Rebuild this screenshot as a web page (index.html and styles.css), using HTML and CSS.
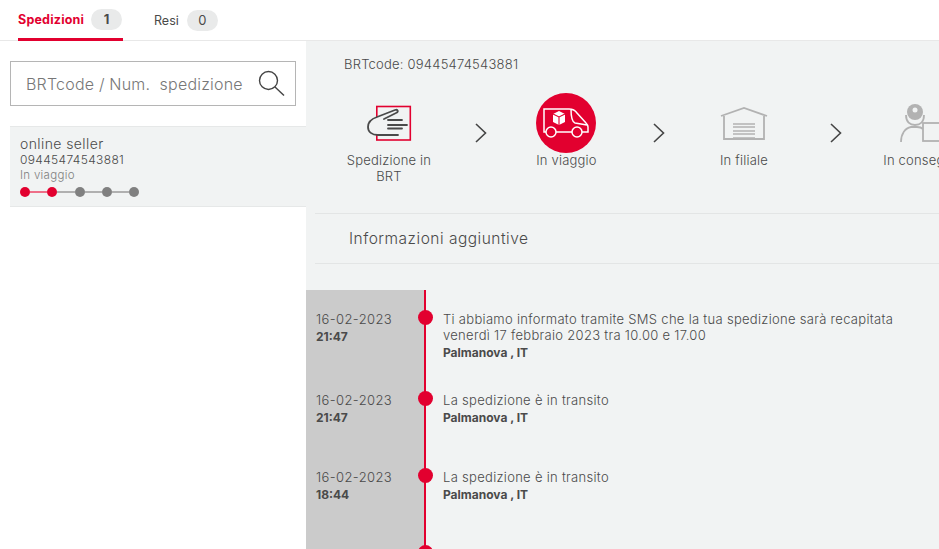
FILE: index.html
```html
<!DOCTYPE html>
<html lang="it">
<head>
    <meta charset="UTF-8">
    <meta name="viewport" content="width=device-width, initial-scale=1.0">
    <title>Spedizioni</title>
    <link rel="stylesheet" href="styles.css">
</head>
<body>
    <nav class="tabs">
        <a class="tab tab-active">Spedizioni <span class="tab-count">1</span></a>
        <a class="tab">Resi <span class="tab-count">0</span></a>
    </nav>

    <div class="main">
        <aside class="sidebar">
            <div class="search">
                <span class="search-text">BRTcode / Num. &nbsp;spedizione</span>
                <svg class="search-icon" width="27" height="27" viewBox="0 0 27 27" fill="none" stroke="#444" stroke-width="1.4">
                    <circle cx="10.5" cy="10.5" r="9"/>
                    <path d="M17 17l9 8.5"/>
                </svg>
            </div>
            <div class="parcel">
                <div class="parcel-name">online seller</div>
                <div class="parcel-code">09445474543881</div>
                <div class="parcel-status">In viaggio</div>
                <div class="dots">
                    <i class="dot dot-on"></i><i class="link link-on"></i>
                    <i class="dot dot-on"></i><i class="link"></i>
                    <i class="dot"></i><i class="link"></i>
                    <i class="dot"></i><i class="link"></i>
                    <i class="dot"></i>
                </div>
            </div>
        </aside>

        <section class="detail">
            <div class="code">BRTcode: 09445474543881</div>

            <div class="steps">
                <div class="step">
                    <div class="step-icon">
                        <svg width="46" height="36" viewBox="0 0 46 36" fill="none" stroke-linecap="round">
                            <rect x="10.800" y="1.500" width="33.500" height="33.500" stroke="#e2002f" stroke-width="1.600"/>
                            <path d="M29 5L11 12C5 14 2 17 2 22C2 27 6 30 12 30H32L36 14L30 8C33 7 32 4 29 5Z" fill="#f1f3f3"/>
                            <path d="M18 14L30 8C33 7 32 4 29 5L11 12C5 14 2 17 2 22C2 27 6 30 12 30H32M22 15H36M22 20H41M22 23.500H36" stroke="#4a4a4a" stroke-width="1.800"/>
                        </svg>
                    </div>
                    <div class="step-label">Spedizione in BRT</div>
                </div>
                <svg class="arrow" width="12" height="20" viewBox="0 0 12 20" fill="none" stroke="#444" stroke-width="1.600"><path d="M1 1l9.500 9L1 19"/></svg>

                <div class="step">
                    <div class="step-circle">
                        <svg width="46" height="30" viewBox="0 0 46 30" fill="none" stroke="#fff" stroke-width="1.500">
                            <path d="M3 24H1V1h25c4 0 6 1 8 4l9 10c1 1 2 2 2 4v5h-6M13 24h16M28 1c0 8 1 13 4 14l12 2"/>
                            <circle cx="8" cy="24" r="5"/>
                            <circle cx="34" cy="24" r="5"/>
                            <path d="M10 6l6-3 6 3v8l-6 3-6-3z" fill="#fff" stroke="none"/>
                            <path d="M10 6l6 3 6-3M16 9v8" stroke="#e2002f" stroke-width="1.100"/>
                        </svg>
                    </div>
                    <div class="step-label">In viaggio</div>
                </div>
                <svg class="arrow" width="12" height="20" viewBox="0 0 12 20" fill="none" stroke="#444" stroke-width="1.600"><path d="M1 1l9.500 9L1 19"/></svg>

                <div class="step">
                    <div class="step-icon">
                        <svg width="48" height="33" viewBox="0 0 48 33" fill="none" stroke="#b2b2b2" stroke-width="1.800">
                            <path d="M1 9L24 1l23 8M4 9v23h40V9"/>
                            <path d="M13 17h22M13 20h22M13 24h22M13 27h22M13 31h22" stroke-width="1.400"/>
                        </svg>
                    </div>
                    <div class="step-label">In filiale</div>
                </div>
                <svg class="arrow" width="12" height="20" viewBox="0 0 12 20" fill="none" stroke="#444" stroke-width="1.600"><path d="M1 1l9.500 9L1 19"/></svg>

                <div class="step">
                    <div class="step-icon step-icon-person">
                        <svg width="60" height="38" viewBox="0 0 60 38" fill="none" stroke="#b2b2b2" stroke-width="1.800">
                            <circle cx="15" cy="8" r="8" fill="#b2b2b2" stroke="none"/>
                            <circle cx="15" cy="6" r="2.500" fill="#f1f3f3" stroke="none"/>
                            <path d="M6 11c0 7 4 10 9 10s9-3 9-10"/>
                            <path d="M1 38c0-8 4-14 10-15h6c3 0 5 1 6 2"/>
                            <rect x="23" y="19" width="36" height="18" fill="#f1f3f3"/>
                        </svg>
                    </div>
                    <div class="step-label">In consegna</div>
                </div>
            </div>

            <div class="extra">Informazioni aggiuntive</div>

            <div class="timeline">
                <div class="event">
                    <div class="event-date">16-02-2023<b>21:47</b></div>
                    <div class="event-text">
                        Ti abbiamo informato tramite SMS che la tua spedizione sarà recapitata<br>
                        venerdì 17 febbraio 2023 tra 10.00 e 17.00
                        <b>Palmanova , IT</b>
                    </div>
                </div>
                <div class="event">
                    <div class="event-date">16-02-2023<b>21:47</b></div>
                    <div class="event-text">La spedizione è in transito<b>Palmanova , IT</b></div>
                </div>
                <div class="event">
                    <div class="event-date">16-02-2023<b>18:44</b></div>
                    <div class="event-text">La spedizione è in transito<b>Palmanova , IT</b></div>
                </div>
                <div class="event">
                    <div class="event-date"></div>
                </div>
            </div>
        </section>
    </div>
</body>
</html>
```

FILE: styles.css
```css
* {
    box-sizing: border-box;
}
html, body {
    height: 100%;
}
body {
    margin: 0;
    overflow: hidden;
    background: #fff;
    color: #4a4a4a;
    font-family: Inter, "Open Sans", sans-serif;
    font-weight: 300;
    font-size: 13px;
}
b {
    display: block;
    font-weight: 700;
    font-size: 12px;
    letter-spacing: 0;
}

.tabs {
    display: flex;
    height: 41px;
    padding-left: 18px;
    gap: 31px;
    border-bottom: 1px solid #e8e8e8;
}
.tab {
    display: flex;
    align-items: center;
    gap: 8px;
    height: 41px;
    font-size: 12.5px;
    font-weight: 400;
}
.tab-active {
    width: 105px;
    gap: 7px;
    color: #e2002f;
    font-weight: 700;
    letter-spacing: .2px;
    border-bottom: 3px solid #e2002f;
}
.tab-count {
    width: 31px;
    height: 21px;
    line-height: 21px;
    border-radius: 11px;
    background: #e9eaea;
    color: #4a4a4a;
    text-align: center;
    font-size: 13px;
}
.tab-active .tab-count {
    font-weight: 700;
}

.main {
    display: flex;
    height: 508px;
}
.sidebar {
    width: 306px;
    flex-shrink: 0;
    padding: 20px 0 0 10px;
}
.search {
    display: flex;
    align-items: center;
    justify-content: space-between;
    width: 286px;
    height: 45px;
    padding: 0 10px 0 15px;
    border: 1px solid #b5b5b5;
}
.search-text {
    font-size: 16px;
    letter-spacing: .2px;
    color: #777;
    white-space: nowrap;
}
.parcel {
    height: 81px;
    margin-top: 20px;
    padding: 9px 10px 10px;
    background: #f1f3f3;
    border-top: 1px solid #e6e8e8;
    border-bottom: 1px solid #e6e8e8;
}
.parcel-name {
    font-size: 14px;
    line-height: 16px;
    letter-spacing: .4px;
}
.parcel-code {
    font-size: 12px;
    line-height: 16px;
    letter-spacing: .35px;
}
.parcel-status {
    font-size: 11.5px;
    line-height: 15px;
    letter-spacing: .3px;
    color: #808080;
}
.dots {
    display: flex;
    align-items: center;
    margin-top: 4px;
}
.dot {
    width: 10px;
    height: 10px;
    border-radius: 50%;
    background: #808080;
    flex-shrink: 0;
}
.dot-on {
    background: #e2002f;
}
.link {
    width: 17.25px;
    height: 2px;
    background: #b0b0b0;
}
.link-on {
    background: #ee6f88;
}

.detail {
    flex: 1;
    min-width: 0;
    overflow: hidden;
    background: #f1f3f3;
}
.code {
    padding: 16px 0 0 38px;
    line-height: 15px;
    font-size: 13px;
    letter-spacing: .22px;
}
.steps {
    display: flex;
    align-items: flex-start;
    height: 120px;
    margin-top: 21px;
    margin-left: 33px;
    white-space: nowrap;
}
.step {
    width: 100px;
    flex-shrink: 0;
    text-align: center;
}
.step-icon {
    display: flex;
    align-items: center;
    justify-content: center;
    height: 60px;
}
.step-icon-person {
    justify-content: flex-start;
    padding-left: 28px;
}
.step-circle {
    display: flex;
    align-items: center;
    justify-content: center;
    width: 60px;
    height: 60px;
    margin: 0 0 0 19px;
    border-radius: 50%;
    background: #e2002f;
}
.step-label {
    margin-top: -1px;
    line-height: 16px;
    font-size: 13px;
    letter-spacing: .2px;
    white-space: normal;
}
.arrow {
    flex-shrink: 0;
    margin: 30px 29.5px 0 36px;
}
.extra {
    height: 51px;
    margin-left: 9px;
    padding-left: 34px;
    line-height: 50px;
    font-size: 15.5px;
    letter-spacing: .5px;
    border-top: 1px solid #e3e5e5;
    border-bottom: 1px solid #e3e5e5;
}
.timeline {
    margin-top: 26px;
}
.event {
    display: flex;
    min-height: 77px;
}
.event:first-child {
    min-height: 81px;
}
.event-date {
    position: relative;
    width: 120px;
    flex-shrink: 0;
    padding: 21px 0 0 10px;
    background: #cbcbcb;
    border-right: 2px solid #e2002f;
    line-height: 17px;
    letter-spacing: .4px;
}
.event-date::after {
    content: "";
    position: absolute;
    top: 20px;
    right: -9px;
    width: 15px;
    height: 15px;
    border-radius: 50%;
    background: #e2002f;
}
.event-text {
    padding: 21px 0 9px 17px;
    line-height: 16px;
    font-size: 13px;
    letter-spacing: .3px;
}
.event-text b {
    margin-top: 1px;
    line-height: 18px;
}
```
